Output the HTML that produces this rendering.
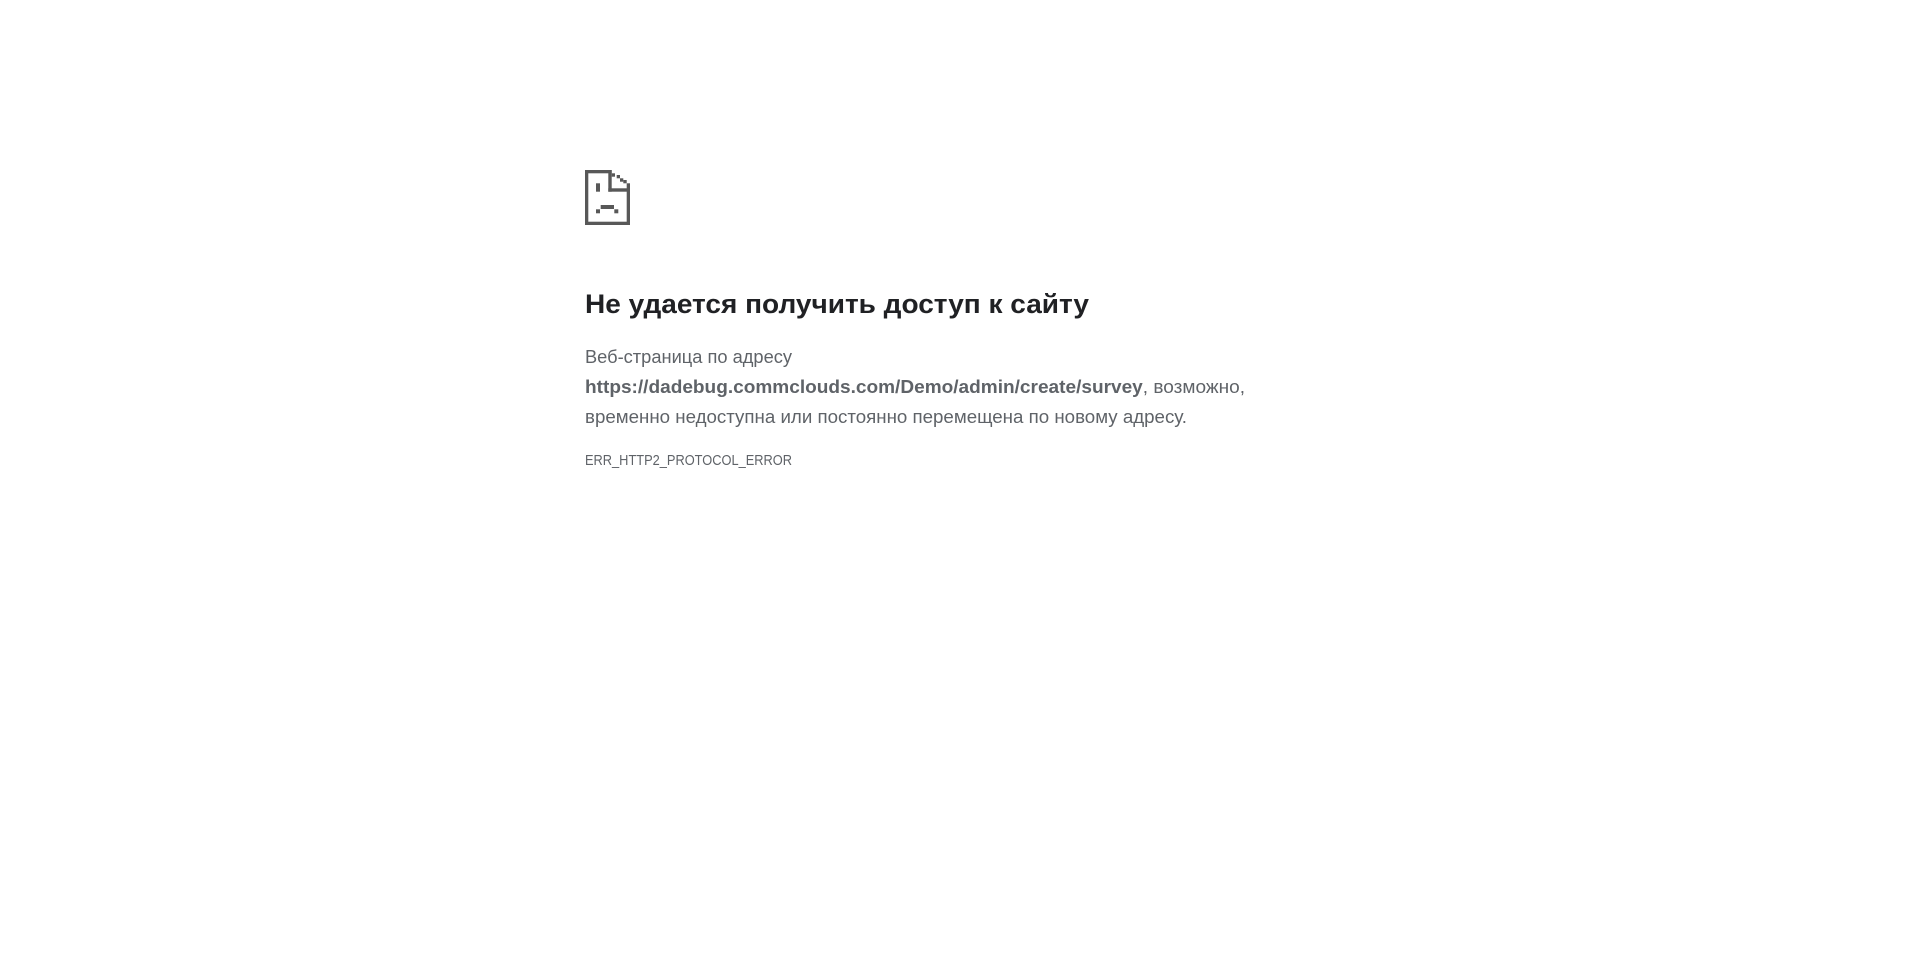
<!DOCTYPE html>
<html><head><meta charset="utf-8"><style>
html,body{margin:0;padding:0;background:#fff;width:1920px;height:967px;overflow:hidden;font-family:"Liberation Sans",sans-serif}
.l{position:absolute;left:585px;white-space:nowrap;line-height:1.117;transform-origin:0 0}
#h{font-size:27px;top:288.6px;color:#202124;font-weight:bold}
.b{font-size:18px;color:#5f6368}
#e{font-size:15px;top:453.4px;color:#5f6368}
</style></head><body>
<svg style="position:absolute;left:580px;top:160px" width="100" height="80" viewBox="0 0 100 80" fill="#585858">
<rect x="5" y="10" width="3.3" height="55"/>
<rect x="5" y="10" width="26.7" height="3.3"/>
<rect x="5" y="61.7" width="45" height="3.3"/>
<rect x="46.7" y="23.3" width="3.3" height="41.7"/>
<rect x="28.3" y="10" width="3.4" height="21.7"/>
<rect x="28.3" y="28.3" width="21.7" height="3.4"/>
<rect x="31.7" y="13.3" width="3.3" height="3.4"/>
<rect x="36.7" y="15" width="3.3" height="3.3"/>
<rect x="40" y="18.3" width="3.3" height="3.4"/>
<rect x="43.3" y="20" width="3.4" height="3.3"/>
<rect x="16" y="23.3" width="4" height="8.4"/>
<rect x="20.7" y="45" width="13.3" height="4"/>
<rect x="16" y="49.3" width="4" height="4"/>
<rect x="34.3" y="49.3" width="4" height="4"/>
</svg>
<div class="l" id="h">Не удается получить доступ к сайту</div>
<div class="l b" id="b1" style="top:346.7px">Веб-страница по адресу</div>
<div class="l b" id="b2" style="top:376.7px"><b>https://dadebug.commclouds.com/Demo/admin/create/survey</b>, возможно,</div>
<div class="l b" id="b3" style="top:406.7px">временно недоступна или постоянно перемещена по новому адресу.</div>
<div class="l" id="e">ERR_HTTP2_PROTOCOL_ERROR</div>
<script>
var t={h:504,b1:207,b2:660,b3:602,e:207};
for(var k in t){var el=document.getElementById(k);var w=el.getBoundingClientRect().width;if(w>0)el.style.transform='scaleX('+(t[k]/w)+')';}
</script>
</body></html>
